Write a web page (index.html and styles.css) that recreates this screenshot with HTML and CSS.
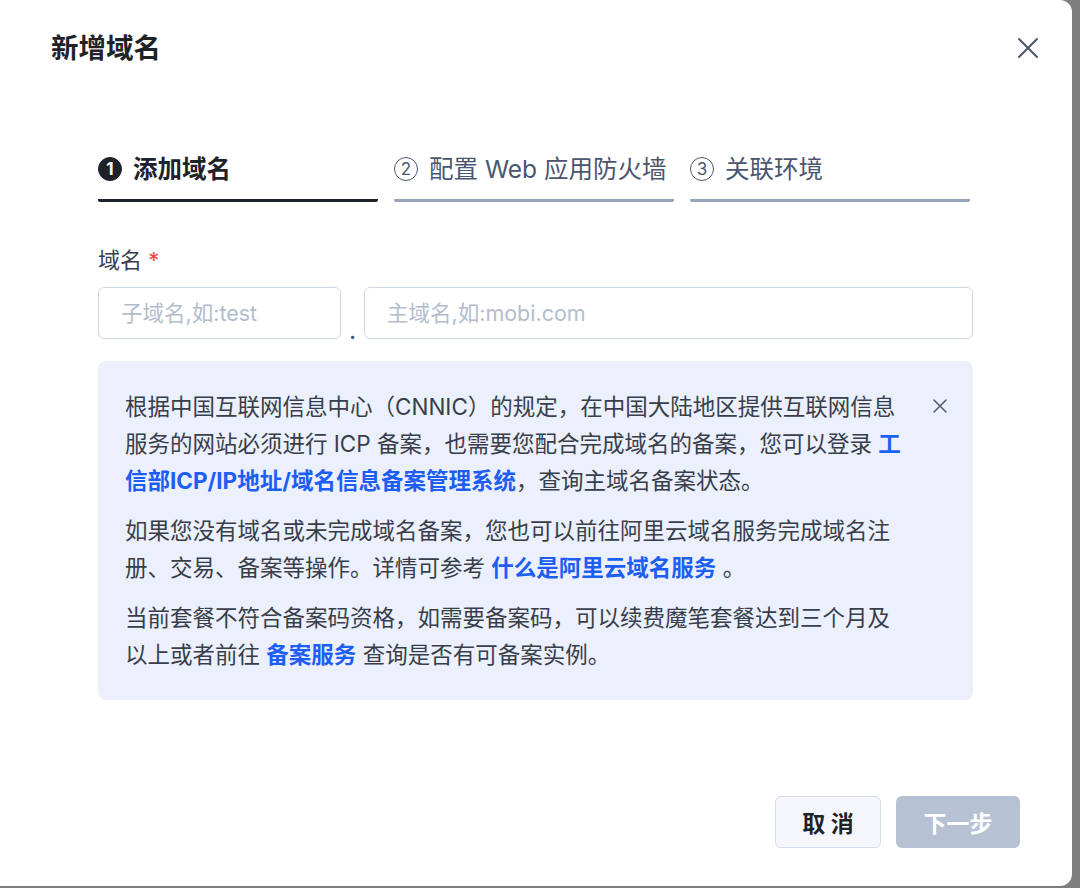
FILE: index.html
```html
<!DOCTYPE html>
<html lang="zh-CN">
<head>
    <meta charset="UTF-8">
    <meta name="viewport" content="width=device-width, initial-scale=1.0">
    <title>新增域名</title>
    <link rel="stylesheet" href="styles.css">
</head>
<body>

<div class="dialog">
    <div class="dialog-header">
        <h1>新增域名</h1>
        <button class="close" type="button" aria-label="关闭">
            <svg width="22" height="22" viewBox="0 0 22 22"><path d="M2 2 L20 20 M20 2 L2 20" stroke="#4a5568" stroke-width="2" stroke-linecap="round"/></svg>
        </button>
    </div>

    <div class="dialog-body">
        <!-- Steps -->
        <div class="steps">
            <div class="step active">
                <div class="step-title"><span class="step-num">1</span>添加域名</div>
            </div>
            <div class="step">
                <div class="step-title"><span class="step-num">2</span>配置 Web 应用防火墙</div>
            </div>
            <div class="step">
                <div class="step-title"><span class="step-num">3</span>关联环境</div>
            </div>
        </div>

        <!-- Domain -->
        <label class="field-label">域名 <span class="required">*</span></label>
        <div class="domain-row">
            <input type="text" class="input sub" placeholder="子域名,如:test">
            <span class="dot">.</span>
            <input type="text" class="input main" placeholder="主域名,如:mobi.com">
        </div>

        <!-- ICP notice -->
        <div class="notice">
            <div class="notice-text">
                <p>根据中国互联网信息中心（CNNIC）的规定，在中国大陆地区提供互联网信息服务的网站必须进行 ICP 备案，也需要您配合完成域名的备案，您可以登录 <a href="#">工信部ICP/IP地址/域名信息备案管理系统</a>，查询主域名备案状态。</p>
                <p>如果您没有域名或未完成域名备案，您也可以前往阿里云域名服务完成域名注册、交易、备案等操作。详情可参考 <a href="#">什么是阿里云域名服务</a> 。</p>
                <p>当前套餐不符合备案码资格，如需要备案码，可以续费魔笔套餐达到三个月及以上或者前往 <a href="#">备案服务</a> 查询是否有可备案实例。</p>
            </div>
            <button class="notice-close" type="button" aria-label="关闭">
                <svg width="14" height="14" viewBox="0 0 14 14"><path d="M1 1 L13 13 M13 1 L1 13" stroke="#555f70" stroke-width="1.6" stroke-linecap="round"/></svg>
            </button>
        </div>
    </div>

    <div class="dialog-footer">
        <button class="btn btn-cancel" type="button">取 消</button>
        <button class="btn btn-next" type="button" disabled>下一步</button>
    </div>
</div>

</body>
</html>
```

FILE: styles.css
```css
body {
    font-family: "Inter", "Noto Sans CJK SC", sans-serif;
    background-color: #7f7f7f;
    margin: 0;
    padding: 0;
}
.dialog {
    width: 1072px;
    height: 886px;
    background-color: #ffffff;
    border-radius: 0 12px 12px 0;
    box-sizing: border-box;
    display: flex;
    flex-direction: column;
}
.dialog-header {
    display: flex;
    justify-content: space-between;
    align-items: center;
    padding: 31px 33px 0 51px;
}
.dialog-header h1 {
    margin: 0;
    font-size: 27.5px;
    line-height: 34px;
    font-weight: 700;
    color: #1f2329;
}
.close {
    border: none;
    background: none;
    padding: 0;
    width: 22px;
    height: 22px;
    cursor: pointer;
}
.dialog-body {
    padding: 0 99px 0 98px;
    flex: 1;
}
.steps {
    display: flex;
    gap: 16px;
    margin: 87px 3px 0 0;
}
.step {
    flex: 1;
    padding-bottom: 13px;
    border-bottom: 3px solid #97a3ba;
    border-radius: 0 0 2px 2px;
}
.step.active {
    border-bottom-color: #1e222b;
}
.step-title {
    display: flex;
    align-items: center;
    gap: 11px;
    font-size: 24.5px;
    line-height: 34px;
    color: #4a5670;
}
.step.active .step-title {
    color: #1e222b;
    font-weight: 700;
}
.step-num {
    width: 22px;
    height: 22px;
    border: 1.5px solid #4a5670;
    border-radius: 50%;
    display: flex;
    align-items: center;
    justify-content: center;
    font-size: 17px;
    line-height: 1;
    font-weight: 400;
}
.step.active .step-num {
    background-color: #1e222b;
    border-color: #1e222b;
    color: #ffffff;
    font-weight: 700;
}
.field-label {
    display: block;
    margin-top: 43px;
    font-size: 22px;
    line-height: 30px;
    color: #333d4f;
}
.required {
    color: #ef4444;
}
.domain-row {
    display: flex;
    align-items: flex-end;
    margin-top: 12px;
}
.input {
    height: 52px;
    box-sizing: border-box;
    border: 1px solid #cfd7e4;
    border-radius: 6px;
    padding: 0 22px;
    font-family: inherit;
    font-size: 21.5px;
    color: #1f2329;
    background: #ffffff;
    outline: none;
}
.input::placeholder {
    color: #b3bccc;
}
.input.sub {
    width: 243px;
}
.input.main {
    flex: 1;
}
.dot {
    width: 23px;
    text-align: center;
    font-size: 20px;
    line-height: 14px;
    color: #4a5670;
    font-weight: 700;
}
.notice {
    display: flex;
    align-items: flex-start;
    margin-top: 22px;
    padding: 27px 26px 27px 27px;
    background-color: #ebf0fc;
    border-radius: 8px;
}
.notice-text {
    width: 780px;
}
.notice-text p {
    margin: 0 0 13px;
    font-size: 22.5px;
    line-height: 37px;
    color: #383e4a;
}
.notice-text p:last-child {
    margin-bottom: 0;
}
.notice-text a {
    color: #1d5ef4;
    font-weight: 700;
    text-decoration: none;
}
.notice-close {
    border: none;
    background: none;
    padding: 0;
    margin: 11px 0 0 28px;
    width: 14px;
    height: 14px;
    cursor: pointer;
}
.dialog-footer {
    display: flex;
    justify-content: flex-end;
    gap: 15px;
    padding: 0 52px 38px 0;
}
.btn {
    height: 52px;
    border-radius: 6px;
    font-family: inherit;
    font-size: 23px;
    font-weight: 700;
    cursor: pointer;
}
.btn-cancel {
    width: 106px;
    background-color: #f4f6fb;
    border: 1px solid #d4dce9;
    color: #1f2329;
}
.btn-next {
    width: 124px;
    background-color: #b6c2d4;
    border: none;
    color: #ffffff;
    cursor: not-allowed;
}
```
